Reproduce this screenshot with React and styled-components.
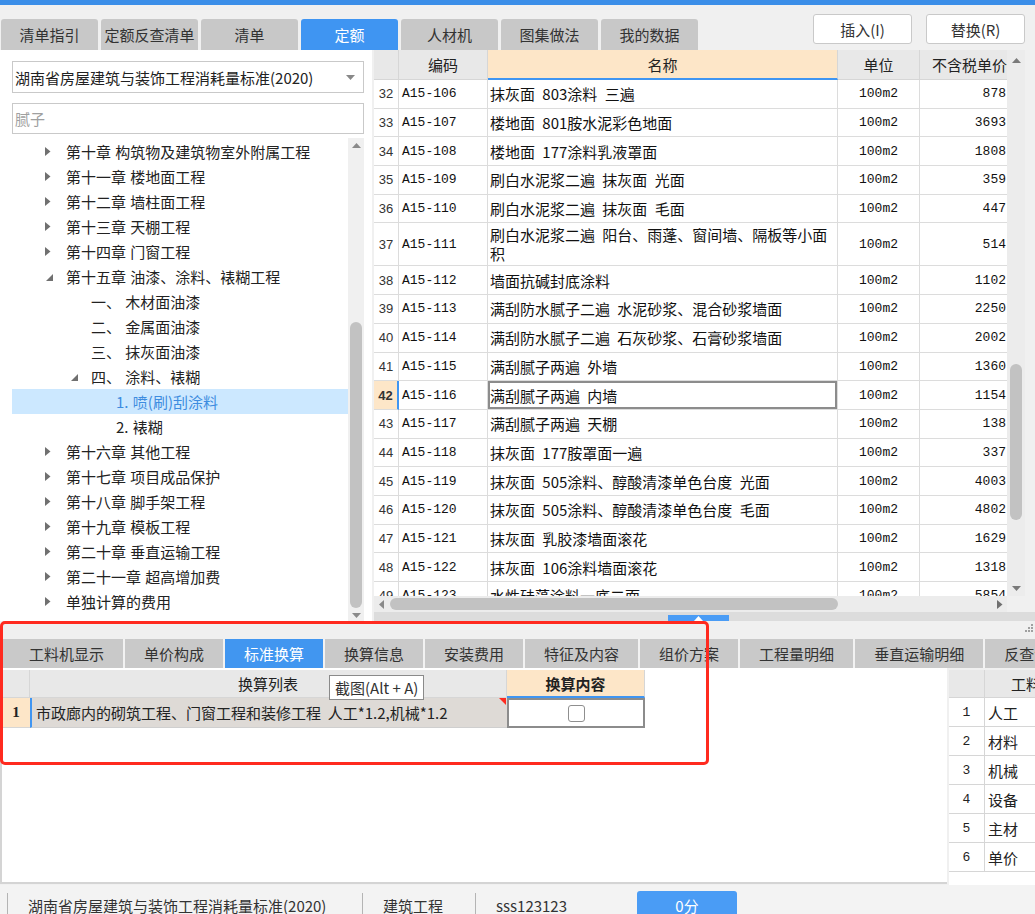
import React from 'react'
import styled, { createGlobalStyle } from 'styled-components'

const GlobalStyle = createGlobalStyle`
  html, body {
    margin: 0;
    padding: 0;
    background: #f0f0f0;
  }
  * {
    box-sizing: border-box;
  }
`

const Page = styled.div`
  position: relative;
  width: 1035px;
  height: 914px;
  overflow: hidden;
  display: flex;
  flex-direction: column;
  background: #f0f0f0;
  font-family: "Noto Sans CJK SC", "Microsoft YaHei", sans-serif;
  font-size: 15px;
  color: #333;
`

const TitleStrip = styled.div`
  height: 5px;
  flex-shrink: 0;
  background: #3b8ee8;
`

const Header = styled.div`
  height: 45px;
  flex-shrink: 0;
  display: flex;
  justify-content: space-between;
  align-items: flex-end;
  padding-left: 1px;
`

const TabBar = styled.div`
  display: flex;
  gap: 3px;
`

const TopTab = styled.div`
  width: 97px;
  height: 31px;
  display: flex;
  align-items: center;
  justify-content: center;
  border-radius: 3px 3px 0 0;
  line-height: 1;
  background: ${props => props.active ? '#3f95f2' : '#c8c8c8'};
  color: ${props => props.active ? '#fff' : '#333'};
`

const Actions = styled.div`
  align-self: flex-start;
  margin-top: 9px;
  margin-right: 10px;
  display: flex;
  gap: 14px;
`

const ActionButton = styled.button`
  width: 99px;
  height: 30px;
  padding: 0;
  background: #fff;
  border: 1px solid #c9c9c9;
  border-radius: 3px;
  font: inherit;
  line-height: 1;
  color: #333;
`

const Main = styled.div`
  height: 571px;
  flex-shrink: 0;
  display: flex;
  gap: 2px;
`

const LeftPanel = styled.div`
  width: 372px;
  display: flex;
  flex-direction: column;
  padding: 11px 8px 0 12px;
  background: #fff;
`

const Select = styled.div`
  height: 32px;
  display: flex;
  align-items: center;
  justify-content: space-between;
  padding: 0 8px 0 2px;
  border: 1px solid #c9c9c9;
  line-height: 1;
  color: #222;
`

const SearchBox = styled.div`
  height: 31px;
  margin-top: 10px;
  display: flex;
  align-items: center;
  padding-left: 2px;
  border: 1px solid #c9c9c9;
  line-height: 1;
  color: #a0a0a0;
`

const TreeWrap = styled.div`
  flex: 1;
  min-height: 0;
  margin-top: 4px;
  display: flex;
`

const TreeList = styled.div`
  flex: 1;
  padding-top: 1px;
  overflow: hidden;
`

const TreeRow = styled.div`
  height: 25px;
  display: flex;
  align-items: center;
  padding-left: ${props => 30 + props.level * 25}px;
  line-height: 1;
  white-space: pre;
  word-spacing: 1px;
  background: ${props => props.selected ? '#cce8ff' : 'transparent'};
  color: ${props => props.selected ? '#3d8ce0' : '#222'};
`

const ArrowBox = styled.span`
  width: 24px;
  height: 25px;
  flex-shrink: 0;
  display: flex;
  align-items: ${props => props.open ? 'flex-end' : 'center'};
  padding-left: ${props => props.open ? 4 : 3}px;
  padding-bottom: ${props => props.open ? 8 : 0}px;
`

const VScroll = styled.div`
  width: ${props => props.width}px;
  flex-shrink: 0;
  display: flex;
  flex-direction: column;
  align-items: center;
  background: ${props => props.track};
`

const ScrollArrow = styled.div`
  height: ${props => props.size}px;
  width: 100%;
  flex-shrink: 0;
  display: flex;
  align-items: center;
  justify-content: center;
`

const ScrollTrack = styled.div`
  flex: 1;
  width: 100%;
  display: flex;
  flex-direction: column;
  align-items: center;
  padding-top: ${props => props.offset}px;
`

const Thumb = styled.div`
  width: 12px;
  height: ${props => props.size}px;
  border-radius: 6px;
  background: #c2c2c2;
`

const RightPanel = styled.div`
  flex: 1;
  display: flex;
  flex-direction: column;
`

const GridArea = styled.div`
  height: 562px;
  margin-right: 10px;
  display: flex;
  flex-direction: column;
`

const GridTop = styled.div`
  height: 546px;
  display: flex;
`

const TableClip = styled.div`
  width: 633px;
  flex-shrink: 0;
  overflow: hidden;
  background: #fff;
`

const GridRow = styled.div`
  display: grid;
  grid-template-columns: 25px 89px 350px 82px 100px;
  width: 646px;
  height: ${props => props.h}px;
`

const HeadCell = styled.div`
  display: flex;
  align-items: center;
  justify-content: center;
  line-height: 1;
  white-space: nowrap;
  overflow: hidden;
  border-right: 1px solid #d6d6d6;
  border-bottom: ${props => props.accent ? '2px solid #3f95f2' : '1px solid #d6d6d6'};
  background: ${props => props.accent ? '#fde6c8' : '#e8e8e8'};
  color: #222;
`

const BodyCell = styled.div`
  display: flex;
  align-items: center;
  justify-content: ${props => props.align || 'flex-start'};
  padding: ${props => props.pad || '0 3px'};
  border-right: 1px solid #dcdcdc;
  border-bottom: 1px solid #dcdcdc;
  overflow: hidden;
  color: #111;
`

const NumCell = styled(BodyCell)`
  font-family: "Liberation Mono", monospace;
  font-size: 13px;
  white-space: nowrap;
`

const RowNumCell = styled(BodyCell)`
  justify-content: center;
  padding: 0;
  font-family: "Liberation Sans", sans-serif;
  font-size: 13px;
  color: #333;
  background: ${props => props.current ? '#fde6c8' : '#fff'};
  font-weight: ${props => props.current ? 700 : 400};
  border-right: ${props => props.current ? '2px solid #3f95f2' : '1px solid #dcdcdc'};
`

const NameCell = styled(BodyCell)`
  padding: 0 4px 0 2px;
  line-height: 19px;
  white-space: pre-line;
  word-spacing: 4px;
  box-shadow: ${props => props.current ? 'inset 0 0 0 2px #8c8c8c' : 'none'};
`

const HScroll = styled.div`
  height: 16px;
  width: 633px;
  display: flex;
  align-items: center;
  background: #ececec;
`

const HArrow = styled.div`
  width: 14px;
  display: flex;
  justify-content: center;
  margin-left: ${props => props.end ? 'auto' : '0'};
`

const HThumb = styled.div`
  width: 448px;
  height: 12px;
  margin-left: 2px;
  border-radius: 6px;
  background: #c2c2c2;
`

const Splitter = styled.div`
  height: 9px;
  display: flex;
  align-items: flex-end;
  background: #dcdcdc;
`

const SplitHandle = styled.div`
  width: 61px;
  height: 6px;
  margin-left: 294px;
  display: flex;
  align-items: center;
  justify-content: center;
  background: #4a9cf5;
`

const BottomPanel = styled.div`
  height: 264px;
  flex-shrink: 0;
  display: flex;
  flex-direction: column;
`

const GripStrip = styled.div`
  height: 18px;
  display: flex;
  justify-content: flex-end;
  align-items: flex-start;
  padding: 3px 2px 0 0;
  background: #f0f0f0;
`

const BottomTabs = styled.div`
  height: 29px;
  display: flex;
  padding-left: 10px;
  background: #c9c9c9;
  white-space: nowrap;
  overflow: hidden;
`

const BottomTab = styled.div`
  padding: 0 19px;
  display: flex;
  align-items: center;
  flex-shrink: 0;
  line-height: 1;
  border-right: 2px solid #f2f2f2;
  background: ${props => props.active ? '#4196f0' : 'transparent'};
  color: ${props => props.active ? '#fff' : '#333'};
`

const BottomBody = styled.div`
  flex: 1;
  display: flex;
  overflow: hidden;
`

const ConvArea = styled.div`
  width: 947px;
  height: 216px;
  flex-shrink: 0;
  padding-top: 2px;
  border-left: 2px solid #d4d4d4;
  border-bottom: 2px solid #d4d4d4;
  background: #fff;
`

const ConvRow = styled.div`
  display: grid;
  grid-template-columns: 28px 477px 138px;
  height: ${props => props.h}px;
`

const ConvHead = styled.div`
  display: flex;
  align-items: center;
  justify-content: center;
  line-height: 1;
  border-right: 1px solid #d6d6d6;
  border-bottom: ${props => props.accent ? '2px solid #3f95f2' : '1px solid #d6d6d6'};
  background: ${props => props.accent ? '#fde6c8' : '#e8e8e8'};
  font-weight: ${props => props.accent ? 700 : 400};
  color: #222;
`

const ConvNum = styled.div`
  display: flex;
  align-items: center;
  justify-content: center;
  background: #fde6c8;
  font-family: "Liberation Serif", serif;
  font-weight: 700;
  font-size: 15px;
  color: #222;
  border-bottom: 1px solid #d6d6d6;
`

const ConvText = styled.div`
  position: relative;
  display: flex;
  align-items: center;
  padding-left: 4px;
  background: #dedad6;
  border-left: 2px solid #3f95f2;
  border-bottom: 1px solid #cfcfcf;
  white-space: pre;
  color: #222;

  &::after {
    content: '';
    position: absolute;
    top: 0;
    right: 1px;
    border-top: 7px solid #ff2a1f;
    border-left: 7px solid transparent;
  }
`

const ConvCheckCell = styled.div`
  display: flex;
  align-items: center;
  justify-content: center;
  background: #fff;
  box-shadow: inset 0 0 0 2px #8c8c8c;
`

const CheckBox = styled.span`
  width: 17px;
  height: 17px;
  border: 1px solid #8f8f8f;
  border-radius: 3px;
  background: #fff;
`

const MiniArea = styled.div`
  flex: 1;
  min-width: 0;
  padding: 2px 0 0 2px;
  background: #f0f0f0;
  overflow: hidden;
`

const MiniTable = styled.div`
  height: 215px;
  width: 120px;
  background: #fff;
`

const MiniRow = styled.div`
  display: grid;
  grid-template-columns: 36px 84px;
  height: ${props => props.h}px;
`

const MiniCell = styled.div`
  display: flex;
  align-items: center;
  justify-content: ${props => props.center ? 'center' : 'flex-start'};
  padding-left: ${props => props.indent || 0}px;
  line-height: 1;
  white-space: nowrap;
  overflow: hidden;
  border-right: 1px solid #d6d6d6;
  border-bottom: 1px solid #d6d6d6;
  background: ${props => props.head ? '#e8e8e8' : '#fff'};
  font-family: ${props => props.mono ? '"Liberation Mono", monospace' : 'inherit'};
  font-size: ${props => props.mono ? '13px' : '15px'};
  color: #222;
`

const StatusBar = styled.div`
  height: 29px;
  flex-shrink: 0;
  display: flex;
  align-items: flex-end;
  padding-left: 7px;
  background: #f3f3f3;
`

const StatusItem = styled.div`
  width: ${props => props.w}px;
  height: 21px;
  padding: 5px 0 0 20px;
  border-left: 1px solid #b4b4b4;
  line-height: 16px;
  white-space: nowrap;
  color: #333;
`

const ScoreButton = styled.div`
  width: 100px;
  height: 23px;
  margin-left: 34px;
  padding-top: 7px;
  text-align: center;
  line-height: 16px;
  border-radius: 3px 3px 0 0;
  background: #4a9cf5;
  color: #fff;
`

const Annotation = styled.div`
  position: absolute;
  left: 0;
  top: 621px;
  width: 709px;
  height: 144px;
  border: 3px solid #ff2a1f;
  border-radius: 5px;
  pointer-events: none;
`

const Tooltip = styled.div`
  position: absolute;
  left: 329px;
  top: 675px;
  height: 25px;
  padding: 0 5px;
  display: flex;
  align-items: center;
  line-height: 1;
  background: #fff;
  border: 1px solid #8a8a8a;
  color: #333;
`

const TriRight = () => (
  <svg width='6' height='9'><polygon points='0,0 5.5,4.5 0,9' fill='#707070' /></svg>
)

const TriOpen = () => (
  <svg width='7' height='7'><polygon points='7,0 7,7 0,7' fill='#707070' /></svg>
)

const TriUp = ({ color = '#8a8a8a' }) => (
  <svg width='9' height='5'><polygon points='0,5 4.5,0 9,5' fill={color} /></svg>
)

const TriDown = ({ color = '#8a8a8a' }) => (
  <svg width='9' height='5'><polygon points='0,0 9,0 4.5,5' fill={color} /></svg>
)

const TriLeft = () => (
  <svg width='5' height='9'><polygon points='5,0 0,4.5 5,9' fill='#8a8a8a' /></svg>
)

const Grip = () => (
  <svg width='8' height='8'>
    {[[6, 0], [6, 3], [3, 3], [6, 6], [3, 6], [0, 6]].map(([x, y]) => (
      <rect key={x + '-' + y} x={x} y={y} width='2' height='2' fill='#a0a0a0' />
    ))}
  </svg>
)

const topTabs = ['清单指引', '定额反查清单', '清单', '定额', '人材机', '图集做法', '我的数据']

const tree = [
  { level: 0, label: '第十章 构筑物及建筑物室外附属工程', arrow: 'closed' },
  { level: 0, label: '第十一章 楼地面工程', arrow: 'closed' },
  { level: 0, label: '第十二章 墙柱面工程', arrow: 'closed' },
  { level: 0, label: '第十三章 天棚工程', arrow: 'closed' },
  { level: 0, label: '第十四章 门窗工程', arrow: 'closed' },
  { level: 0, label: '第十五章 油漆、涂料、裱糊工程', arrow: 'open' },
  { level: 1, label: '一、 木材面油漆' },
  { level: 1, label: '二、 金属面油漆' },
  { level: 1, label: '三、 抹灰面油漆' },
  { level: 1, label: '四、 涂料、裱糊', arrow: 'open' },
  { level: 2, label: '1. 喷(刷)刮涂料', selected: true },
  { level: 2, label: '2. 裱糊' },
  { level: 0, label: '第十六章 其他工程', arrow: 'closed' },
  { level: 0, label: '第十七章 项目成品保护', arrow: 'closed' },
  { level: 0, label: '第十八章 脚手架工程', arrow: 'closed' },
  { level: 0, label: '第十九章 模板工程', arrow: 'closed' },
  { level: 0, label: '第二十章 垂直运输工程', arrow: 'closed' },
  { level: 0, label: '第二十一章 超高增加费', arrow: 'closed' },
  { level: 0, label: '单独计算的费用', arrow: 'closed' }
]

// row 37 wraps in the column, so its break is kept in the data
const quotas = [
  [32, 'A15-106', '抹灰面 803涂料 三遍', '878'],
  [33, 'A15-107', '楼地面 801胺水泥彩色地面', '3693'],
  [34, 'A15-108', '楼地面 177涂料乳液罩面', '1808'],
  [35, 'A15-109', '刷白水泥浆二遍 抹灰面 光面', '359'],
  [36, 'A15-110', '刷白水泥浆二遍 抹灰面 毛面', '447'],
  [37, 'A15-111', '刷白水泥浆二遍 阳台、雨蓬、窗间墙、隔板等小面\n积', '514'],
  [38, 'A15-112', '墙面抗碱封底涂料', '1102'],
  [39, 'A15-113', '满刮防水腻子二遍 水泥砂浆、混合砂浆墙面', '2250'],
  [40, 'A15-114', '满刮防水腻子二遍 石灰砂浆、石膏砂浆墙面', '2002'],
  [41, 'A15-115', '满刮腻子两遍 外墙', '1360'],
  [42, 'A15-116', '满刮腻子两遍 内墙', '1154'],
  [43, 'A15-117', '满刮腻子两遍 天棚', '138'],
  [44, 'A15-118', '抹灰面 177胺罩面一遍', '337'],
  [45, 'A15-119', '抹灰面 505涂料、醇酸清漆单色台度 光面', '4003'],
  [46, 'A15-120', '抹灰面 505涂料、醇酸清漆单色台度 毛面', '4802'],
  [47, 'A15-121', '抹灰面 乳胶漆墙面滚花', '1629'],
  [48, 'A15-122', '抹灰面 106涂料墙面滚花', '1318'],
  [49, 'A15-123', '水性硅藻涂料一底二面', '5854']
]

const bottomTabs = ['工料机显示', '单价构成', '标准换算', '换算信息', '安装费用', '特征及内容', '组价方案', '工程量明细', '垂直运输明细', '反查清单']

const resources = ['人工', '材料', '机械', '设备', '主材', '单价']

const CURRENT_ROW = 42

export default function App () {
  return (
    <>
      <GlobalStyle />
      <Page>
        <TitleStrip />
        <Header>
          <TabBar>
            {topTabs.map(tab => (
              <TopTab key={tab} active={tab === '定额'}>{tab}</TopTab>
            ))}
          </TabBar>
          <Actions>
            <ActionButton>插入(I)</ActionButton>
            <ActionButton>替换(R)</ActionButton>
          </Actions>
        </Header>

        <Main>
          <LeftPanel>
            <Select>
              <span>湖南省房屋建筑与装饰工程消耗量标准(2020)</span>
              <TriDown color='#888' />
            </Select>
            <SearchBox>腻子</SearchBox>
            <TreeWrap>
              <TreeList>
                {tree.map(node => (
                  <TreeRow key={node.label} level={node.level} selected={node.selected}>
                    <ArrowBox open={node.arrow === 'open'}>
                      {node.arrow === 'closed' && <TriRight />}
                      {node.arrow === 'open' && <TriOpen />}
                    </ArrowBox>
                    {node.label}
                  </TreeRow>
                ))}
              </TreeList>
              <VScroll width={16} track='#f0f0f0'>
                <ScrollArrow size={14}><TriUp /></ScrollArrow>
                <ScrollTrack offset={170}><Thumb size={286} /></ScrollTrack>
                <ScrollArrow size={12}><TriDown /></ScrollArrow>
              </VScroll>
            </TreeWrap>
          </LeftPanel>

          <RightPanel>
            <GridArea>
              <GridTop>
                <TableClip>
                  <GridRow h={30}>
                    <HeadCell />
                    <HeadCell>编码</HeadCell>
                    <HeadCell accent>名称</HeadCell>
                    <HeadCell>单位</HeadCell>
                    <HeadCell>不含税单价</HeadCell>
                  </GridRow>
                  {quotas.map(([no, code, name, price]) => (
                    <GridRow key={no} h={no === 37 ? 43 : 28.7}>
                      <RowNumCell current={no === CURRENT_ROW}>{no}</RowNumCell>
                      <NumCell pad='0 3px'>{code}</NumCell>
                      <NameCell current={no === CURRENT_ROW}>{name}</NameCell>
                      <NumCell align='center'>100m2</NumCell>
                      <NumCell align='flex-end' pad='0 13px 0 3px'>{price}</NumCell>
                    </GridRow>
                  ))}
                </TableClip>
                <VScroll width={18} track='#ececec'>
                  <ScrollArrow size={20}><TriUp color='#7a7a7a' /></ScrollArrow>
                  <ScrollTrack offset={294}><Thumb size={156} /></ScrollTrack>
                  <ScrollArrow size={16}><TriDown color='#7a7a7a' /></ScrollArrow>
                </VScroll>
              </GridTop>
              <HScroll>
                <HArrow><TriLeft /></HArrow>
                <HThumb />
                <HArrow end><TriRight /></HArrow>
              </HScroll>
            </GridArea>
            <Splitter>
              <SplitHandle><TriUp color='#fff' /></SplitHandle>
            </Splitter>
          </RightPanel>
        </Main>

        <BottomPanel>
          <GripStrip><Grip /></GripStrip>
          <BottomTabs>
            {bottomTabs.map(tab => (
              <BottomTab key={tab} active={tab === '标准换算'}>{tab}</BottomTab>
            ))}
          </BottomTabs>
          <BottomBody>
            <ConvArea>
              <ConvRow h={28}>
                <ConvHead />
                <ConvHead>换算列表</ConvHead>
                <ConvHead accent>换算内容</ConvHead>
              </ConvRow>
              <ConvRow h={30}>
                <ConvNum>1</ConvNum>
                <ConvText>{'市政廊内的砌筑工程、门窗工程和装修工程  人工*1.2,机械*1.2'}</ConvText>
                <ConvCheckCell><CheckBox /></ConvCheckCell>
              </ConvRow>
            </ConvArea>
            <MiniArea>
              <MiniTable>
                <MiniRow h={28}>
                  <MiniCell head />
                  <MiniCell head indent={26}>工料机名称</MiniCell>
                </MiniRow>
                {resources.map((name, i) => (
                  <MiniRow key={name} h={29}>
                    <MiniCell center mono>{i + 1}</MiniCell>
                    <MiniCell indent={3}>{name}</MiniCell>
                  </MiniRow>
                ))}
              </MiniTable>
            </MiniArea>
          </BottomBody>
        </BottomPanel>

        <StatusBar>
          <StatusItem w={355}>湖南省房屋建筑与装饰工程消耗量标准(2020)</StatusItem>
          <StatusItem w={113}>建筑工程</StatusItem>
          <StatusItem w={128}>sss123123</StatusItem>
          <ScoreButton>0分</ScoreButton>
        </StatusBar>

        <Annotation />
        <Tooltip>截图(Alt + A)</Tooltip>
      </Page>
    </>
  )
}
